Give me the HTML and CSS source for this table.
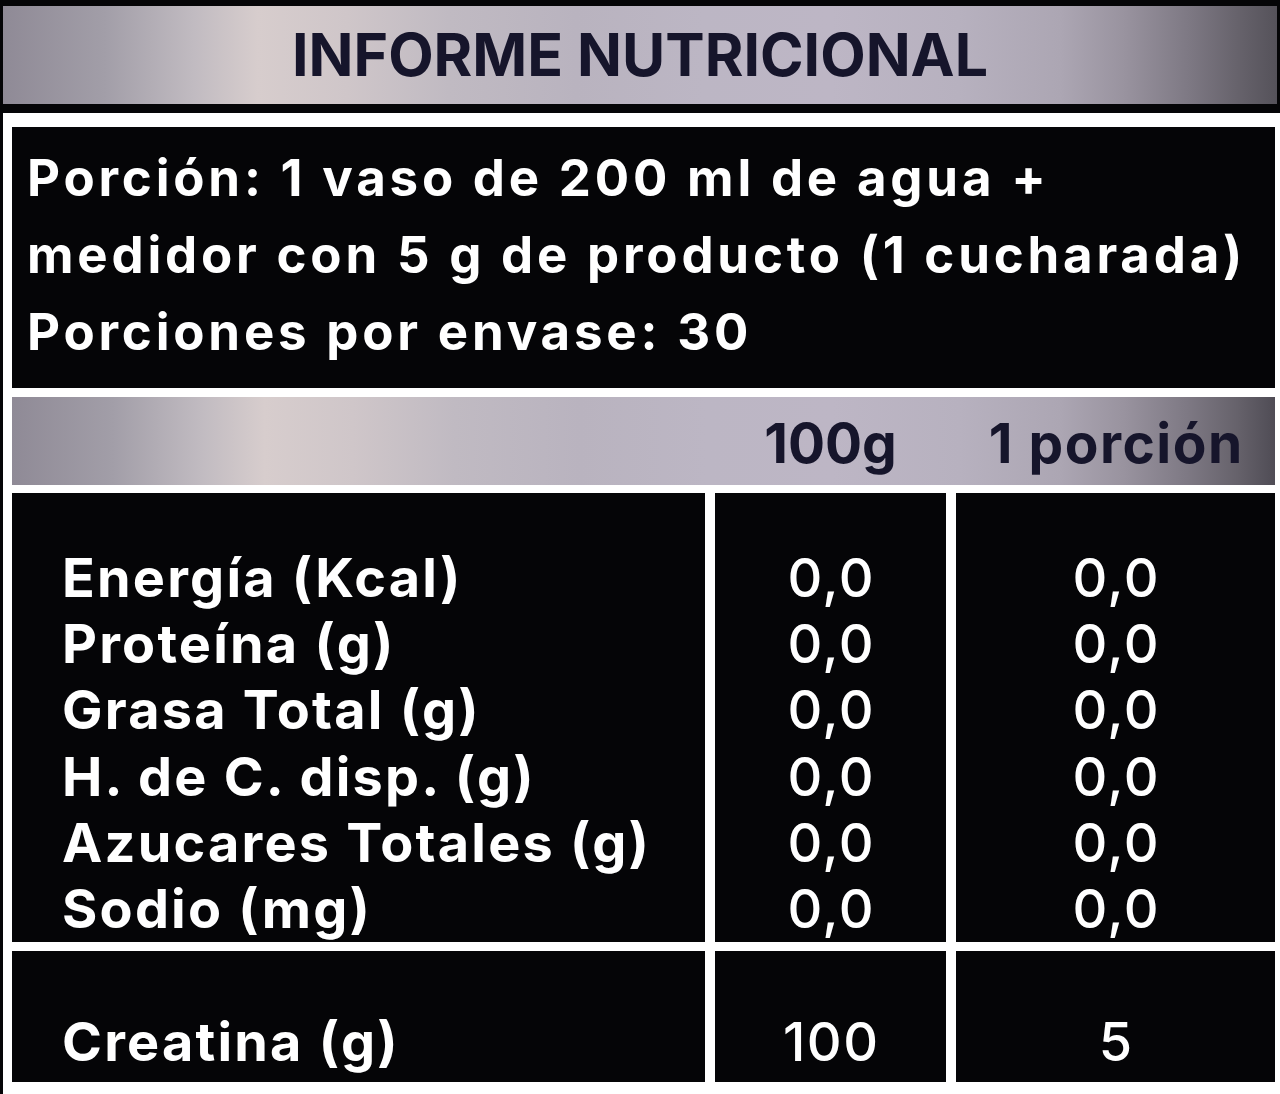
FILE: index.html
```html
<!DOCTYPE html>
<html lang="es">
<head>
<meta charset="utf-8">
<title>Informe Nutricional</title>
<link rel="stylesheet" href="styles.css">
</head>
<body>
<div class="label">
  <div class="title-bar">
    <h1 class="title">INFORME NUTRICIONAL</h1>
  </div>
  <div class="frame">
    <div class="serving">
      <p>Porción: 1 vaso de 200 ml de agua +</p>
      <p>medidor con 5 g de producto (1 cucharada)</p>
      <p>Porciones por envase: 30</p>
    </div>
    <div class="grid head">
      <div></div>
      <div class="hcell">100g</div>
      <div class="hcell">1 porción</div>
    </div>
    <div class="grid rows main">
      <div class="cell names">
        <p>Energía (Kcal)</p>
        <p>Proteína (g)</p>
        <p>Grasa Total (g)</p>
        <p>H. de C. disp. (g)</p>
        <p>Azucares Totales (g)</p>
        <p>Sodio (mg)</p>
      </div>
      <div class="cell vals">
        <p>0,0</p><p>0,0</p><p>0,0</p><p>0,0</p><p>0,0</p><p>0,0</p>
      </div>
      <div class="cell vals">
        <p>0,0</p><p>0,0</p><p>0,0</p><p>0,0</p><p>0,0</p><p>0,0</p>
      </div>
    </div>
    <div class="grid rows extra">
      <div class="cell names"><p>Creatina (g)</p></div>
      <div class="cell vals"><p>100</p></div>
      <div class="cell vals"><p>5</p></div>
    </div>
  </div>
</div>
</body>
</html>
```

FILE: styles.css
```css
* { box-sizing: border-box; }
html, body { margin: 0; padding: 0; background: #ffffff; }
p, h1 { margin: 0; }

.label {
  width: 1280px;
  height: 1094px;
  font-family: Inter, "Open Sans", sans-serif;
  background: #ffffff;
  overflow: hidden;
}

.title-bar {
  background: #050507;
  padding: 6px 3px 9px 3px;
}
.title {
  height: 98px;
  line-height: 98px;
  text-align: center;
  font-size: 59px;
  font-weight: 700;
  color: #16152b;
  background: linear-gradient(90deg,
    #8f8a96 0%, #a29ea8 8%, #c1bbc1 15%, #d7cdcd 20%, #cfc6c9 27%,
    #c0bac2 35%, #b9b3bf 45%, #bcb6c4 55%, #bdb6c5 65%, #b7b1bf 75%,
    #aca6b3 83%, #99939f 88%, #7e7984 93%, #66626b 97%, #55525a 100%);
}

.frame {
  border-left: 3px solid #050507;
  padding: 14px 5px 12px 9px;
}

.serving {
  background: #050507;
  color: #ffffff;
  height: 261px;
  padding: 12px 0 0 15px;
  margin-bottom: 9px;
  font-size: 51px;
  font-weight: 700;
  letter-spacing: 3.8px;
  line-height: 77px;
  white-space: nowrap;
}

.grid {
  display: grid;
  grid-template-columns: 693px 231px 319px;
  column-gap: 10px;
}

.head {
  height: 88px;
  margin-bottom: 8px;
  background: linear-gradient(90deg,
    #8f8a96 0%, #a29ea8 8%, #c1bbc1 15%, #d7cdcd 20%, #cfc6c9 27%,
    #c0bac2 35%, #b9b3bf 45%, #bcb6c4 55%, #bdb6c5 65%, #b7b1bf 75%,
    #aca6b3 83%, #99939f 88%, #7e7984 93%, #66626b 97%, #4f4c55 100%);
}
.hcell {
  text-align: center;
  font-size: 55px;
  font-weight: 700;
  color: #16152b;
  line-height: 88px;
  padding-top: 2px;
}
.hcell:last-child {
  letter-spacing: 1.5px;
  padding-left: 1.5px;
}

.cell {
  background: #050507;
  color: #ffffff;
  font-size: 54px;
  line-height: 66.2px;
  white-space: nowrap;
}
.names {
  padding-left: 50px;
  font-weight: 700;
  letter-spacing: 2.2px;
}
.vals {
  text-align: center;
  font-weight: 500;
  letter-spacing: 1.5px;
  padding-left: 1.5px;
}
.main {
  height: 447px;
  margin-bottom: 11px;
}
.main .cell { padding-top: 52px; }
.extra { height: 131px; }
.extra .cell { padding-top: 58px; }
```
